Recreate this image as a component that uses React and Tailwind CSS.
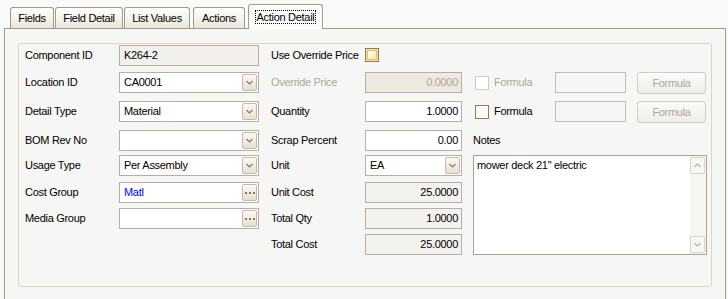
import React from "react";

const Chevron = ({ up = false, color = "#8c7a66" }) => (
  <svg width="7" height="5" viewBox="0 0 7 5" className="block">
    {up ? (
      <polyline points="0.5,4 3.5,1 6.5,4" fill="none" stroke={color} strokeWidth="1.2" />
    ) : (
      <polyline points="0.5,1 3.5,4 6.5,1" fill="none" stroke={color} strokeWidth="1.2" />
    )}
  </svg>
);

const Label = ({ children, disabled }) => (
  <div className={`h-[21px] flex items-center whitespace-nowrap ${disabled ? "text-[#aca899]" : "text-black"}`}>
    {children}
  </div>
);

const Box = ({ children, className = "" }) => (
  <div className={`h-[21px] border border-[#b9aea6] flex items-center ${className}`}>{children}</div>
);

const SmallBtn = ({ children }) => (
  <div className="w-[15px] h-[17px] rounded-[2px] border border-[#c6b9a8] bg-gradient-to-b from-[#fbf9f4] to-[#e7dfd1] flex items-center justify-center">
    {children}
  </div>
);

const Combo = ({ value }) => (
  <Box className="bg-white justify-between pl-[4px] pr-[1px]">
    <span>{value}</span>
    <SmallBtn>
      <Chevron />
    </SmallBtn>
  </Box>
);

const Ellipsis = ({ value, blue }) => (
  <Box className="bg-white justify-between pl-[4px] pr-[1px]">
    <span className={blue ? "text-[#0000ff]" : ""}>{value}</span>
    <SmallBtn>
      <div className="flex gap-[2px]">
        <div className="w-[2px] h-[2px] bg-[#8c7a66]" />
        <div className="w-[2px] h-[2px] bg-[#8c7a66]" />
        <div className="w-[2px] h-[2px] bg-[#8c7a66]" />
      </div>
    </SmallBtn>
  </Box>
);

const Num = ({ value, bg = "bg-white", color = "text-black" }) => (
  <Box className={`${bg} ${color} justify-end pr-[3px]`}>{value}</Box>
);

const FormulaRow = ({ enabled }) => (
  <>
    <div className="flex items-center h-[21px] pl-[13px] gap-[5px]">
      <div
        className={`w-[14px] h-[14px] border ${
          enabled ? "border-[#8b7a68] bg-[#fbfaf7]" : "border-[#d2cbc1] bg-white"
        }`}
      />
      <span className={enabled ? "text-black" : "text-[#aca899]"}>Formula</span>
    </div>
    <div className="h-[21px] border border-[#c4bcb2] bg-[#f6f6f4]" />
    <div className="pl-[11px]">
      <div className="w-[69px] h-[22px] rounded-[3px] border border-[#d3ccc1] bg-gradient-to-b from-[#fbfbfa] to-[#efede8] flex items-center justify-center text-[#aca899]">
        Formula
      </div>
    </div>
  </>
);

const Tab = ({ children, w, selected }) =>
  selected ? (
    <div
      className={`${w} h-[25px] -mb-px relative z-10 border border-b-0 border-[#a39a8b] rounded-t-[3px] bg-[#fbfbfa] flex items-center justify-center`}
    >
      <span className="outline outline-1 outline-dotted outline-black px-[1px] leading-[12px]">{children}</span>
    </div>
  ) : (
    <div
      className={`${w} h-[21px] border border-b-0 border-[#a39a8b] rounded-t-[3px] bg-gradient-to-b from-[#ffffff] to-[#ebe6da] flex items-center justify-center`}
    >
      {children}
    </div>
  );

export default function App() {
  return (
    <div className="w-[728px] h-[299px] overflow-hidden bg-[#f9f9f8] font-['Liberation_Sans',Arial,sans-serif] text-[11px] tracking-[-0.3px] text-black flex flex-col">
      <div className="h-[28px] flex items-end pl-[10px] gap-[1px] shrink-0">
        <Tab w="w-[44px]">Fields</Tab>
        <Tab w="w-[68px]">Field Detail</Tab>
        <Tab w="w-[66px]">List Values</Tab>
        <div className="w-[1px]" />
        <Tab w="w-[52px]">Actions</Tab>
        <div className="w-[1px]" />
        <Tab w="w-[75px]" selected>
          Action Detail
        </Tab>
      </div>
      <div className="flex-1 ml-[4px] mr-[2px] border-l border-t border-r border-[#a39a8b] bg-[#f6f6f5] pt-[14px] pl-[13px]">
        <div className="w-[694px] h-[244px] border border-[#dcd4c4] rounded-[3px] pl-[6px] pt-[1px]">
          <div className="grid grid-cols-[94px_140px_106px_97px_93px_71px_81px] grid-rows-[27px_29px_29px_25px_27px_26px_26px_21px] items-start">
            {/* row 0 */}
            <Label>Component ID</Label>
            <Box className="bg-[#f1f0ec] pl-[4px]">K264-2</Box>
            <div className="pl-[12px]">
              <Label>Use Override Price</Label>
            </div>
            <div className="pt-[3px]">
              <div className="w-[14px] h-[14px] border border-[#8d7b67] p-[1px] bg-[#fbe3a8]">
                <div className="w-full h-full border border-[#f7b84a] bg-gradient-to-br from-[#fffdf3] to-[#fde8b4]" />
              </div>
            </div>
            <div />
            <div />
            <div />

            {/* row 1 */}
            <Label>Location ID</Label>
            <Combo value="CA0001" />
            <div className="pl-[12px]">
              <Label disabled>Override Price</Label>
            </div>
            <Num value="0.0000" bg="bg-[#eee8e1]" color="text-[#aca899]" />
            <FormulaRow enabled={false} />

            {/* row 2 */}
            <Label>Detail Type</Label>
            <Combo value="Material" />
            <div className="pl-[12px]">
              <Label>Quantity</Label>
            </div>
            <Num value="1.0000" />
            <FormulaRow enabled />

            {/* row 3 */}
            <Label>BOM Rev No</Label>
            <Combo value="" />
            <div className="pl-[12px]">
              <Label>Scrap Percent</Label>
            </div>
            <Num value="0.00" />
            <div className="col-span-3 pl-[11px]">
              <Label>Notes</Label>
            </div>

            {/* row 4 */}
            <Label>Usage Type</Label>
            <Combo value="Per Assembly" />
            <div className="pl-[12px]">
              <Label>Unit</Label>
            </div>
            <Combo value="EA" />
            <div className="col-span-3 row-span-4 pl-[11px] h-[100px]">
              <div className="h-full border border-[#aaa296] bg-white flex">
                <div className="flex-1 pl-[3px] pt-[3px] leading-[13px]">mower deck 21" electric</div>
                <div className="w-[17px] bg-[#f6f5f0] border-l border-white flex flex-col justify-between py-[1px] pr-[1px]">
                  <div className="h-[17px] rounded-[2px] border border-[#d9d4ca] bg-[#f7f6f2] flex items-center justify-center">
                    <Chevron up color="#b9b3a8" />
                  </div>
                  <div className="h-[17px] rounded-[2px] border border-[#d9d4ca] bg-[#f7f6f2] flex items-center justify-center">
                    <Chevron color="#b9b3a8" />
                  </div>
                </div>
              </div>
            </div>

            {/* row 5 */}
            <Label>Cost Group</Label>
            <Ellipsis value="Matl" blue />
            <div className="pl-[12px]">
              <Label>Unit Cost</Label>
            </div>
            <Num value="25.0000" bg="bg-[#f3f2ef]" />

            {/* row 6 */}
            <Label>Media Group</Label>
            <Ellipsis value="" />
            <div className="pl-[12px]">
              <Label>Total Qty</Label>
            </div>
            <Num value="1.0000" bg="bg-[#f3f2ef]" />

            {/* row 7 */}
            <div />
            <div />
            <div className="pl-[12px]">
              <Label>Total Cost</Label>
            </div>
            <Num value="25.0000" bg="bg-[#f3f2ef]" />
          </div>
        </div>
      </div>
    </div>
  );
}
